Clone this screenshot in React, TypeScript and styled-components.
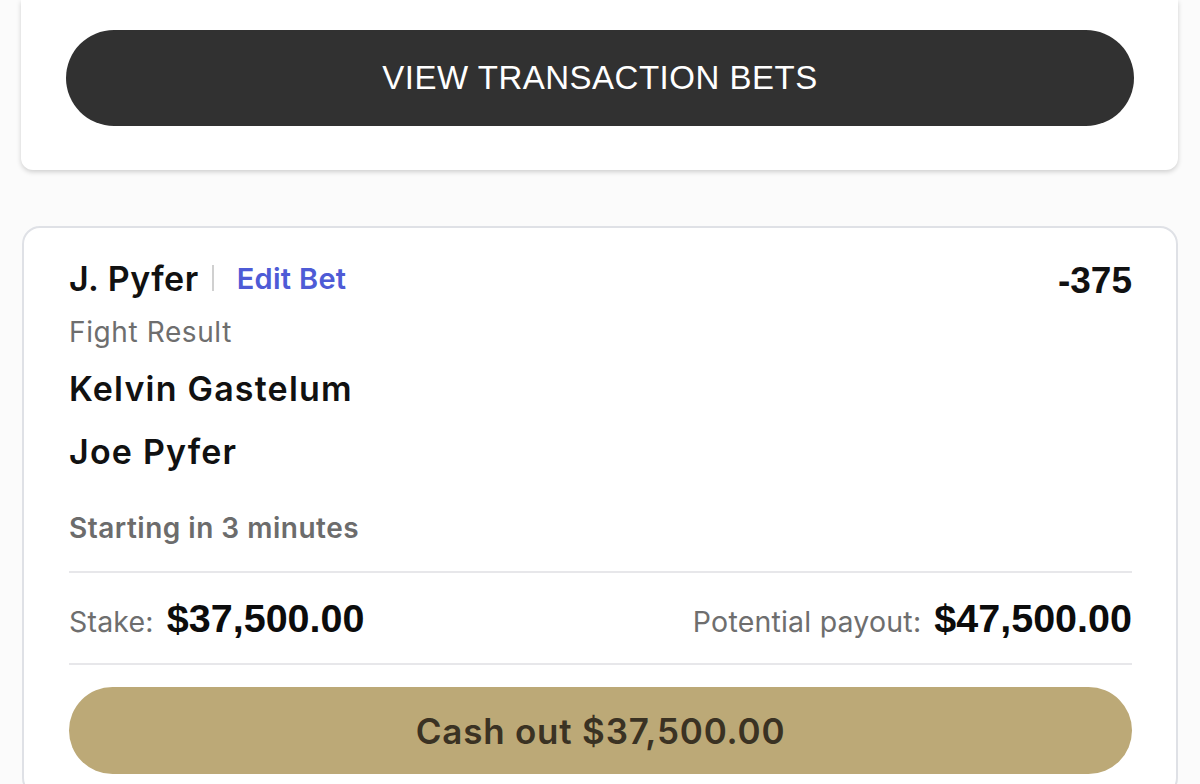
import styled, { createGlobalStyle } from 'styled-components';

const GlobalStyle = createGlobalStyle`
  html, body {
    margin: 0;
    padding: 0;
    background: #fbfbfb;
  }
  body {
    font-family: "Inter", "Liberation Sans", sans-serif;
    overflow: hidden;
  }
`;

const Page = styled.div`
  display: flex;
  flex-direction: column;
  gap: 56px;
  padding: 0 22px 0 21px;
`;

const TopCard = styled.div`
  background: #ffffff;
  border-radius: 0 0 12px 12px;
  box-shadow: 0 2px 5px rgba(0, 0, 0, 0.18);
  padding: 30px 44px 44px 45px;
`;

const DarkButton = styled.button`
  display: flex;
  align-items: center;
  justify-content: center;
  width: 100%;
  height: 96px;
  border: none;
  border-radius: 48px;
  background: #313131;
  color: #ffffff;
  font-family: "Liberation Sans", Arial, sans-serif;
  font-size: 33px;
  letter-spacing: 0.5px;
  cursor: pointer;
`;

const BetCard = styled.div`
  background: #ffffff;
  border: 2px solid #dfe1e6;
  border-radius: 18px;
  padding: 28px 44px 20px 45px;
  margin-left: 1px;
`;

const HeaderRow = styled.div`
  display: flex;
  justify-content: space-between;
  align-items: center;
  height: 44px;
`;

const Selection = styled.div`
  display: flex;
  align-items: center;
`;

const Title = styled.span`
  font-size: 34px;
  font-weight: 600;
  letter-spacing: 0.5px;
  color: #111111;
`;

const Sep = styled.span`
  width: 2px;
  height: 26px;
  background: #d0d0d0;
  margin: 0 23px 0 13px;
`;

const EditLink = styled.a`
  font-size: 29px;
  font-weight: 600;
  letter-spacing: 0.3px;
  color: #4e5bd6;
  text-decoration: none;
`;

const Odds = styled.span`
  font-family: "Liberation Sans", Arial, sans-serif;
  font-size: 37px;
  font-weight: 700;
  color: #111111;
  margin-top: 6px;
`;

const Market = styled.div<{ $top: number }>`
  margin-top: ${(p) => p.$top}px;
  font-size: 28px;
  letter-spacing: 0.6px;
  line-height: 40px;
  color: #6e6e6e;
`;

const Fighter = styled.div<{ $top: number }>`
  margin-top: ${(p) => p.$top}px;
  font-size: 34px;
  line-height: 48px;
  font-weight: 600;
  letter-spacing: 1.2px;
  color: #111111;
`;

const Status = styled.div`
  margin-top: 32px;
  font-size: 28px;
  letter-spacing: 0.5px;
  line-height: 40px;
  font-weight: 600;
  color: #6c6c6c;
`;

const Divider = styled.hr<{ $top: number }>`
  margin: ${(p) => p.$top}px 0 0;
  border: none;
  height: 2px;
  background: #e7e7ea;
`;

const MoneyRow = styled.div`
  display: flex;
  justify-content: space-between;
  align-items: center;
  height: 90px;
`;

const MoneyItem = styled.div`
  display: flex;
  align-items: baseline;
  gap: 13px;
`;

const MoneyLabel = styled.span`
  font-size: 28.5px;
  letter-spacing: 0.2px;
  color: #6e6e6e;
`;

const MoneyValue = styled.span`
  font-family: "Liberation Sans", Arial, sans-serif;
  font-size: 39.5px;
  font-weight: 700;
  color: #0c0c0c;
`;

const CashOut = styled.button`
  display: flex;
  align-items: center;
  justify-content: center;
  width: 100%;
  height: 87px;
  margin-top: 22px;
  border: none;
  border-radius: 44px;
  background: #bca977;
  color: #3a3223;
  font-family: "Inter", "Liberation Sans", sans-serif;
  font-size: 35px;
  font-weight: 600;
  letter-spacing: 0.8px;
  cursor: pointer;
`;

export default function App() {
  return (
    <>
      <GlobalStyle />
      <Page>
        <TopCard>
          <DarkButton type="button">VIEW TRANSACTION BETS</DarkButton>
        </TopCard>
        <BetCard>
          <HeaderRow>
            <Selection>
              <Title>J. Pyfer</Title>
              <Sep />
              <EditLink href="#">Edit Bet</EditLink>
            </Selection>
            <Odds>-375</Odds>
          </HeaderRow>
          <Market $top={12}>Fight Result</Market>
          <Fighter $top={13}>Kelvin Gastelum</Fighter>
          <Fighter $top={15}>Joe Pyfer</Fighter>
          <Status>Starting in 3 minutes</Status>
          <Divider $top={23} />
          <MoneyRow>
            <MoneyItem>
              <MoneyLabel>Stake:</MoneyLabel>
              <MoneyValue>$37,500.00</MoneyValue>
            </MoneyItem>
            <MoneyItem>
              <MoneyLabel>Potential payout:</MoneyLabel>
              <MoneyValue>$47,500.00</MoneyValue>
            </MoneyItem>
          </MoneyRow>
          <Divider $top={0} />
          <CashOut type="button">Cash out $37,500.00</CashOut>
        </BetCard>
      </Page>
    </>
  );
}
